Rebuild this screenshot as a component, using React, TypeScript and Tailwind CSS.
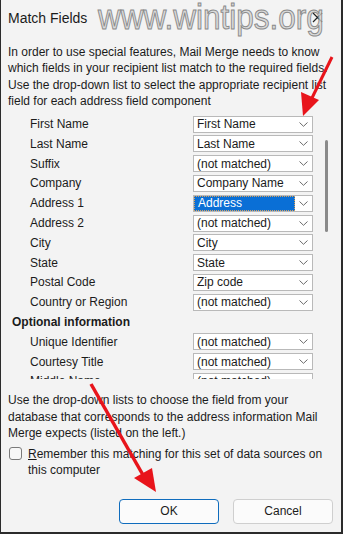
import React from 'react';

const fields = [
  { label: 'First Name', value: 'First Name' },
  { label: 'Last Name', value: 'Last Name' },
  { label: 'Suffix', value: '(not matched)' },
  { label: 'Company', value: 'Company Name' },
  { label: 'Address 1', value: 'Address', selected: true },
  { label: 'Address 2', value: '(not matched)' },
  { label: 'City', value: 'City' },
  { label: 'State', value: 'State' },
  { label: 'Postal Code', value: 'Zip code' },
  { label: 'Country or Region', value: '(not matched)' },
];

const optional = [
  { label: 'Unique Identifier', value: '(not matched)' },
  { label: 'Courtesy Title', value: '(not matched)' },
  { label: 'Middle Name', value: '(not matched)' },
];

const Chevron = () => (
  <svg width="9" height="5" viewBox="0 0 9 5" className="shrink-0">
    <path d="M0.5 0.5 L4.5 4.3 L8.5 0.5" fill="none" stroke="#6b6b6b" strokeWidth="1" />
  </svg>
);

const Row = ({ label, value, selected }: { label: string; value: string; selected?: boolean }) => (
  <div className="flex items-center h-[19.8px] shrink-0">
    <div className="w-[192px] pl-[29px] whitespace-nowrap">{label}</div>
    <div className="w-[120px] h-[17px] flex items-center border border-[#b9b9b9] bg-white">
      {selected ? (
        <div className="w-[101px] h-full bg-[#0a6fd6] text-white pl-[3px] flex items-center border border-dotted border-[#d9a15a]">
          {value}
        </div>
      ) : (
        <div className="w-[101px] pl-[3px] whitespace-nowrap">{value}</div>
      )}
      <div className="flex-1 flex justify-center">
        <Chevron />
      </div>
    </div>
  </div>
);

const App = () => {
  return (
    <div className="relative w-[343px] h-[534px] overflow-hidden bg-[#f3f3f3] border-l border-r-2 border-b-2 border-[#2b2b2b] text-[12px] text-[#1b1b1b] font-['Liberation_Sans',Arial,sans-serif]">
      {/* title bar */}
      <div className="relative h-[36px] flex items-center pl-[7px] text-[14px]">
        Match Fields
        <svg className="absolute left-[311px] top-[12px]" width="11" height="11" viewBox="0 0 11 11">
          <path d="M1 1 L10 10 M10 1 L1 10" stroke="#222" strokeWidth="1.2" />
        </svg>
        <div className="absolute left-[97px] top-[-5px] origin-left scale-x-[0.9] text-[35px] leading-[44px] text-[#d4d4d4]/80 [-webkit-text-stroke:1px_#8a8a8a] whitespace-nowrap">
          www.wintips.org
        </div>
      </div>

      <p className="px-[7px] mt-[8px] leading-[16.3px]">
        In order to use special features, Mail Merge needs to know which fields in your recipient list match to the required fields. Use the drop-down list to select the appropriate recipient list field for each address field component
      </p>

      <div className="relative mt-[5px] h-[265px] overflow-hidden flex flex-col">
        {fields.map((f) => (
          <Row key={f.label} {...f} />
        ))}
        <div className="h-[19.8px] shrink-0 flex items-center pl-[11px] font-bold">Optional information</div>
        {optional.map((f) => (
          <Row key={f.label} {...f} />
        ))}
        <div className="absolute left-[324px] top-[26px] w-[3px] h-[92px] rounded-full bg-[#8a8a8a]" />
      </div>

      <p className="px-[7px] mt-[13px] leading-[16.5px]">
        Use the drop-down lists to choose the field from your database that corresponds to the address information Mail Merge expects (listed on the left.)
      </p>

      <div className="flex mt-[4px] pl-[8px] pr-[8px] gap-[6px]">
        <div className="w-[13px] h-[13px] mt-[1px] shrink-0 rounded-[3px] border border-[#7a7a7a] bg-[#f7f7f7]" />
        <div className="leading-[16px]">
          <span className="underline">R</span>emember this matching for this set of data sources on this computer
        </div>
      </div>

      <div className="flex justify-end gap-[14px] mt-[21px] pr-[8px]">
        <button className="w-[100px] h-[25px] rounded-[4px] border border-[#0f6cbd] bg-[#fbfbfb] text-[12px]">OK</button>
        <button className="w-[100px] h-[25px] rounded-[4px] border border-[#cfcfcf] bg-[#fbfbfb] text-[12px]">Cancel</button>
      </div>

      {/* red arrows */}
      <svg className="absolute left-0 top-0 pointer-events-none" width="343" height="534" viewBox="0 0 343 534">
        <line x1="331" y1="57" x2="310" y2="100" stroke="#e8141b" strokeWidth="3" />
        <polygon points="302,116 300,92 318,100" fill="#e8141b" />
        <line x1="90" y1="384" x2="142" y2="475" stroke="#e8141b" strokeWidth="3.5" />
        <polygon points="155,492 133,478 151,468" fill="#e8141b" />
      </svg>
    </div>
  );
};

export default App;
